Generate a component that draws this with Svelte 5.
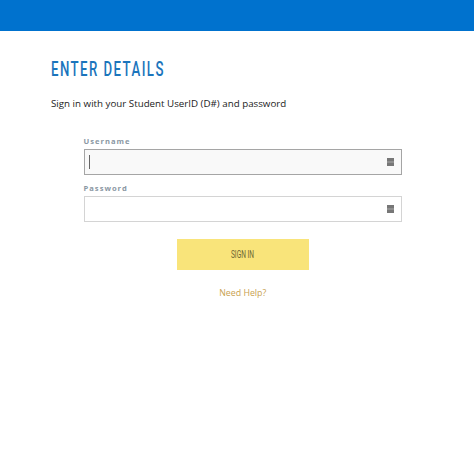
<script>
	let username = '';
	let password = '';
</script>

<header class="banner"></header>

<main class="page">
	<h1>ENTER DETAILS</h1>
	<p class="intro">Sign in with your Student UserID (D#) and password</p>

	<form class="login" on:submit|preventDefault>
		<label for="username">Username</label>
		<div class="field focused">
			<span class="caret"></span>
			<input id="username" type="text" bind:value={username} />
			<svg class="key" width="7" height="8" viewBox="0 0 7 8" aria-hidden="true">
				<rect width="7" height="8" fill="#777" />
				<rect y="3.5" width="7" height="1" fill="#aaa" />
			</svg>
		</div>

		<label for="password">Password</label>
		<div class="field">
			<input id="password" type="password" bind:value={password} />
			<svg class="key" width="7" height="8" viewBox="0 0 7 8" aria-hidden="true">
				<rect width="7" height="8" fill="#777" />
				<rect y="3.5" width="7" height="1" fill="#aaa" />
			</svg>
		</div>

		<button type="submit"><span>SIGN IN</span></button>
		<a href="#help" class="help">Need Help?</a>
	</form>
</main>

<style>
	:global(body) {
		background: #ffffff;
		font-family: "Open Sans", sans-serif;
	}

	.banner {
		height: 31px;
		background: #0072ce;
	}

	.page {
		padding: 28px 72px 0 51px;
	}

	h1 {
		margin: 0;
		font-family: "Roboto", sans-serif;
		font-size: 20px;
		line-height: 21px;
		font-weight: 500;
		letter-spacing: 2.2px;
		color: #1b75bc;
		transform: scaleX(0.66);
		transform-origin: left center;
		white-space: nowrap;
	}

	.intro {
		margin: 16px 0 0;
		font-size: 9.75px;
		line-height: 16px;
		color: #222222;
	}

	.login {
		display: flex;
		flex-direction: column;
		margin: 24px 0 0 32.5px;
	}

	label {
		font-size: 7.6px;
		line-height: 11px;
		font-weight: 700;
		letter-spacing: 1px;
		color: #8a97a3;
		margin-bottom: 2px;
	}

	.field {
		display: flex;
		align-items: center;
		height: 26px;
		box-sizing: border-box;
		border: 1px solid #d4d4d4;
		padding: 0 7px 0 4px;
		margin-bottom: 8px;
		background: #ffffff;
	}

	.field.focused {
		border-color: #a5a5a5;
		background: #f9f9f9;
	}

	.caret {
		width: 1px;
		height: 14px;
		background: #666666;
	}

	input {
		flex: 1;
		min-width: 0;
		border: none;
		outline: none;
		background: none;
		font: inherit;
		font-size: 11px;
	}

	button {
		align-self: center;
		width: 132px;
		height: 31px;
		margin-top: 9px;
		border: none;
		background: #f9e47a;
		color: #6b6331;
		font-family: "Roboto", sans-serif;
		font-size: 10px;
	}

	button span {
		display: inline-block;
		transform: scaleX(0.66);
	}

	.help {
		align-self: center;
		margin-top: 16px;
		font-size: 8.8px;
		line-height: 14px;
		color: #c9a24f;
		text-decoration: none;
	}
</style>
